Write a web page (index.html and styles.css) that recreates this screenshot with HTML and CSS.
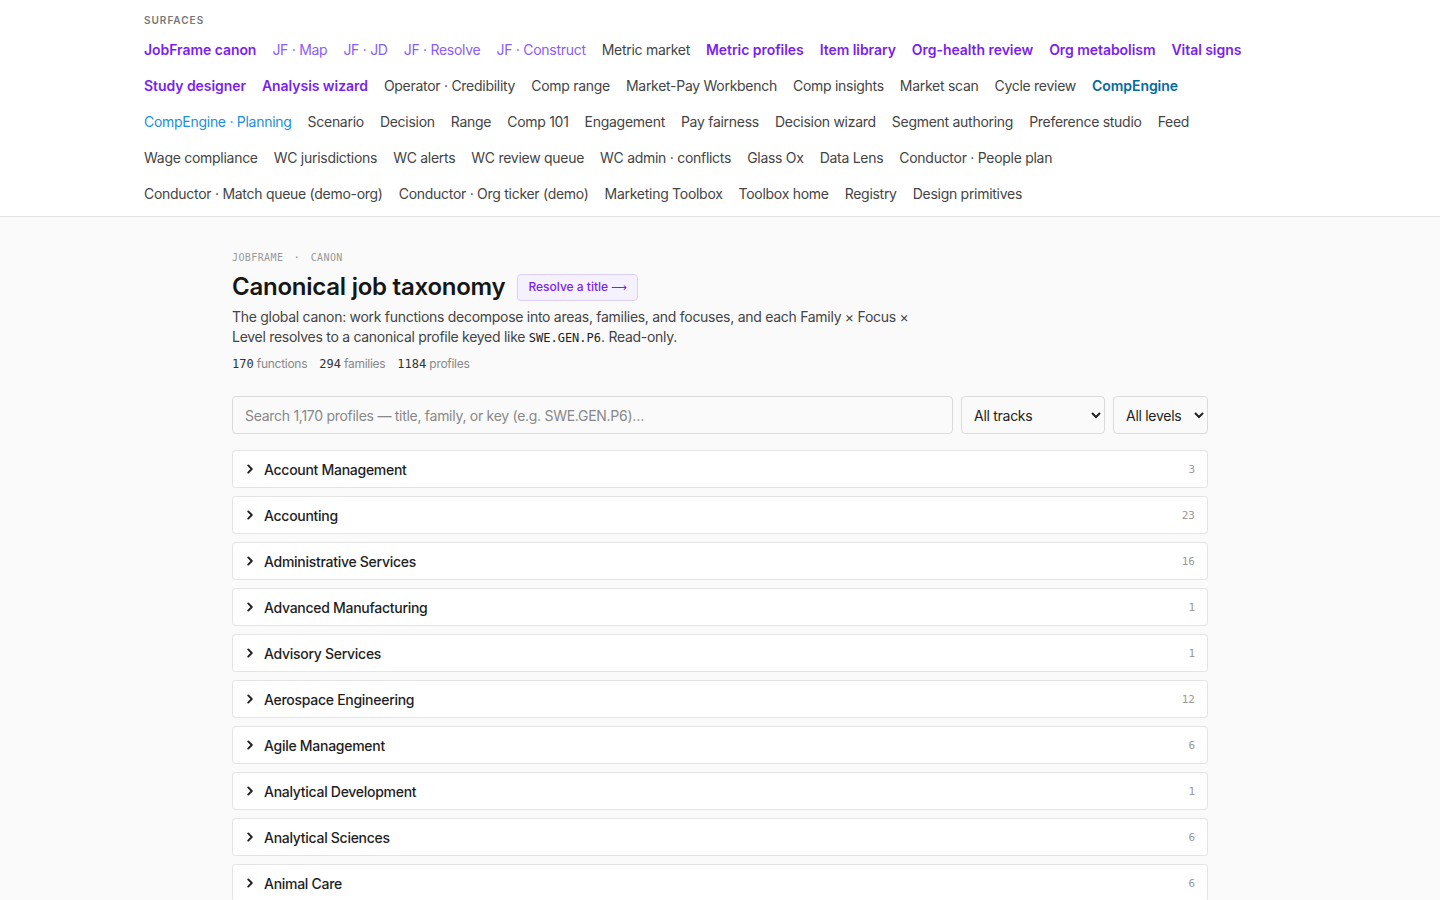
FILE: index.html
```html
<html>

<head>
  <title>Canonical job taxonomy</title>
  <link rel="stylesheet" href="styles.css">
</head>

<body>
  <header class="surfaces">
    <div class="surfaces-inner">
      <div class="surfaces-label">Surfaces</div>
      <nav class="surfaces-nav">
        <a class="jf strong" href="#">JobFrame canon</a>
        <a class="jf" href="#">JF · Map</a>
        <a class="jf" href="#">JF · JD</a>
        <a class="jf" href="#">JF · Resolve</a>
        <a class="jf" href="#">JF · Construct</a>
        <a href="#">Metric market</a>
        <a class="jf strong" href="#">Metric profiles</a>
        <a class="jf strong" href="#">Item library</a>
        <a class="jf strong" href="#">Org-health review</a>
        <a class="jf strong" href="#">Org metabolism</a>
        <a class="jf strong" href="#">Vital signs</a>
        <a class="jf strong" href="#">Study designer</a>
        <a class="jf strong" href="#">Analysis wizard</a>
        <a href="#">Operator · Credibility</a>
        <a href="#">Comp range</a>
        <a href="#">Market-Pay Workbench</a>
        <a href="#">Comp insights</a>
        <a href="#">Market scan</a>
        <a href="#">Cycle review</a>
        <a class="ce strong" href="#">CompEngine</a>
        <a class="ce" href="#">CompEngine · Planning</a>
        <a href="#">Scenario</a>
        <a href="#">Decision</a>
        <a href="#">Range</a>
        <a href="#">Comp 101</a>
        <a href="#">Engagement</a>
        <a href="#">Pay fairness</a>
        <a href="#">Decision wizard</a>
        <a href="#">Segment authoring</a>
        <a href="#">Preference studio</a>
        <a href="#">Feed</a>
        <a href="#">Wage compliance</a>
        <a href="#">WC jurisdictions</a>
        <a href="#">WC alerts</a>
        <a href="#">WC review queue</a>
        <a href="#">WC admin · conflicts</a>
        <a href="#">Glass Ox</a>
        <a href="#">Data Lens</a>
        <a href="#">Conductor · People plan</a>
        <a href="#">Conductor · Match queue (demo-org)</a>
        <a href="#">Conductor · Org ticker (demo)</a>
        <a href="#">Marketing Toolbox</a>
        <a href="#">Toolbox home</a>
        <a href="#">Registry</a>
        <a href="#">Design primitives</a>
      </nav>
    </div>
  </header>

  <main class="page">
    <div class="crumb">JobFrame <span class="dot">·</span> Canon</div>
    <div class="title-row">
      <h1>Canonical job taxonomy</h1>
      <a class="resolve-btn" href="#">Resolve a title <span class="arrow">⟶</span></a>
    </div>
    <p class="lede">
      The global canon: work functions decompose into areas, families, and focuses, and each Family × Focus ×
      Level resolves to a canonical profile keyed like <code>SWE.GEN.P6</code>. Read-only.
    </p>
    <div class="stats">
      <span><b>170</b> functions</span>
      <span><b>294</b> families</span>
      <span><b>1184</b> profiles</span>
    </div>

    <div class="filters">
      <input class="search" type="text" placeholder="Search 1,170 profiles — title, family, or key (e.g. SWE.GEN.P6)…" />
      <select class="pick tracks">
        <option>All tracks</option>
      </select>
      <select class="pick levels">
        <option>All levels</option>
      </select>
    </div>

    <div class="families" id="families"></div>
  </main>

  <script>
    var families = [
      ['Account Management', 3],
      ['Accounting', 23],
      ['Administrative Services', 16],
      ['Advanced Manufacturing', 1],
      ['Advisory Services', 1],
      ['Aerospace Engineering', 12],
      ['Agile Management', 6],
      ['Analytical Development', 1],
      ['Analytical Sciences', 6],
      ['Animal Care', 6],
      ['Animal Health', 4],
      ['Application Development', 18]
    ];

    var list = document.getElementById('families');

    families.forEach(function (f) {
      var row = document.createElement('div');
      row.className = 'family';
      row.innerHTML =
        '<svg class="chev" viewBox="0 0 10 10" width="10" height="10"><path d="M3.2 1.4 L6.8 5 L3.2 8.6" /></svg>' +
        '<span class="family-name">' + f[0] + '</span>' +
        '<span class="family-count">' + f[1] + '</span>';
      list.appendChild(row);
    });
  </script>
</body>

</html>
```

FILE: styles.css
```css
body {
  margin: 0;
  background: #fafafa;
  color: #1a1a1a;
  font-family: Inter, 'Noto Sans', sans-serif;
  font-size: 14px;
  letter-spacing: -0.02em;
}

a {
  text-decoration: none;
}

/* surfaces bar */

.surfaces {
  background: #fff;
  border-bottom: 1px solid #e4e4e4;
}

.surfaces-inner {
  max-width: 1152px;
  margin: 0 auto;
  padding: 14px 0 12px;
}

.surfaces-label {
  font-size: 10px;
  line-height: 12px;
  font-weight: 600;
  letter-spacing: 0.1em;
  text-transform: uppercase;
  color: #777;
  margin-bottom: 14px;
}

.surfaces-nav {
  display: flex;
  flex-wrap: wrap;
  column-gap: 16px;
  row-gap: 16px;
}

.surfaces-nav a {
  font-size: 14px;
  line-height: 20px;
  color: #444;
  white-space: nowrap;
}

.surfaces-nav a.jf {
  color: #8b5cf6;
}

.surfaces-nav a.ce {
  color: #1c8fd8;
}

.surfaces-nav a.strong {
  font-weight: 600;
  letter-spacing: -0.004em;
}

.surfaces-nav a.jf.strong {
  color: #7a1ff0;
}

.surfaces-nav a.ce.strong {
  color: #0369a1;
}

/* page */

.page {
  max-width: 976px;
  margin: 0 auto;
  padding: 35px 0 40px;
}

.crumb {
  font-family: 'DejaVu Sans Mono', monospace;
  font-size: 10px;
  line-height: 12px;
  letter-spacing: 0.04em;
  text-transform: uppercase;
  color: #999;
}

.crumb .dot {
  margin: 0 4px;
}

.title-row {
  display: flex;
  align-items: center;
  gap: 12px;
  margin-top: 7px;
}

h1 {
  margin: 0;
  font-size: 24px;
  line-height: 32px;
  font-weight: 600;
  letter-spacing: -0.01em;
  color: #161616;
}

.resolve-btn {
  font-size: 12px;
  line-height: 16px;
  font-weight: 500;
  letter-spacing: 0;
  color: #7a1ff0;
  background: #f6f1ff;
  border: 1px solid #ddcffb;
  border-radius: 4px;
  padding: 4px 10px;
}

.resolve-btn .arrow {
  font-family: 'DejaVu Sans', sans-serif;
  font-weight: 400;
  font-size: 11px;
}

.lede {
  margin: 4px 0 0;
  max-width: 680px;
  font-size: 14px;
  line-height: 20px;
  color: #444;
}

.lede code {
  font-family: 'DejaVu Sans Mono', monospace;
  font-size: 12px;
  letter-spacing: 0;
  color: #222;
}

.stats {
  display: flex;
  gap: 12px;
  margin-top: 8px;
  font-size: 12px;
  line-height: 16px;
  color: #888;
}

.stats b {
  font-family: 'DejaVu Sans Mono', monospace;
  font-weight: 400;
  letter-spacing: 0;
  color: #333;
}

/* filters */

.filters {
  display: flex;
  gap: 8px;
  margin-top: 24px;
}

.search {
  flex: 1;
  height: 38px;
  box-sizing: border-box;
  padding: 0 12px;
  border: 1px solid #dcdcdc;
  border-radius: 4px;
  background: #fafafa;
  font-family: inherit;
  font-size: 14px;
  letter-spacing: -0.02em;
  color: #222;
}

.search::placeholder {
  color: #888;
}

.pick {
  height: 38px;
  box-sizing: border-box;
  padding: 0 8px;
  border: 1px solid #dcdcdc;
  border-radius: 4px;
  background: #fafafa;
  font-family: inherit;
  font-size: 14px;
  letter-spacing: -0.02em;
  color: #222;
}

.tracks {
  width: 144px;
}

.levels {
  width: 95px;
}

/* family rows */

.families {
  display: flex;
  flex-direction: column;
  gap: 8px;
  margin-top: 16px;
}

.family {
  display: flex;
  align-items: center;
  height: 38px;
  box-sizing: border-box;
  padding: 0 12px;
  background: #fff;
  border: 1px solid #e4e4e4;
  border-radius: 4px;
}

.chev {
  flex: none;
  margin-right: 9px;
}

.chev path {
  fill: none;
  stroke: #1e1e1e;
  stroke-width: 1.9;
  stroke-linecap: round;
  stroke-linejoin: round;
}

.family-name {
  flex: 1;
  font-size: 14px;
  font-weight: 500;
  color: #1e1e1e;
}

.family-count {
  font-family: 'DejaVu Sans Mono', monospace;
  font-size: 11px;
  letter-spacing: 0;
  color: #999;
}
```
